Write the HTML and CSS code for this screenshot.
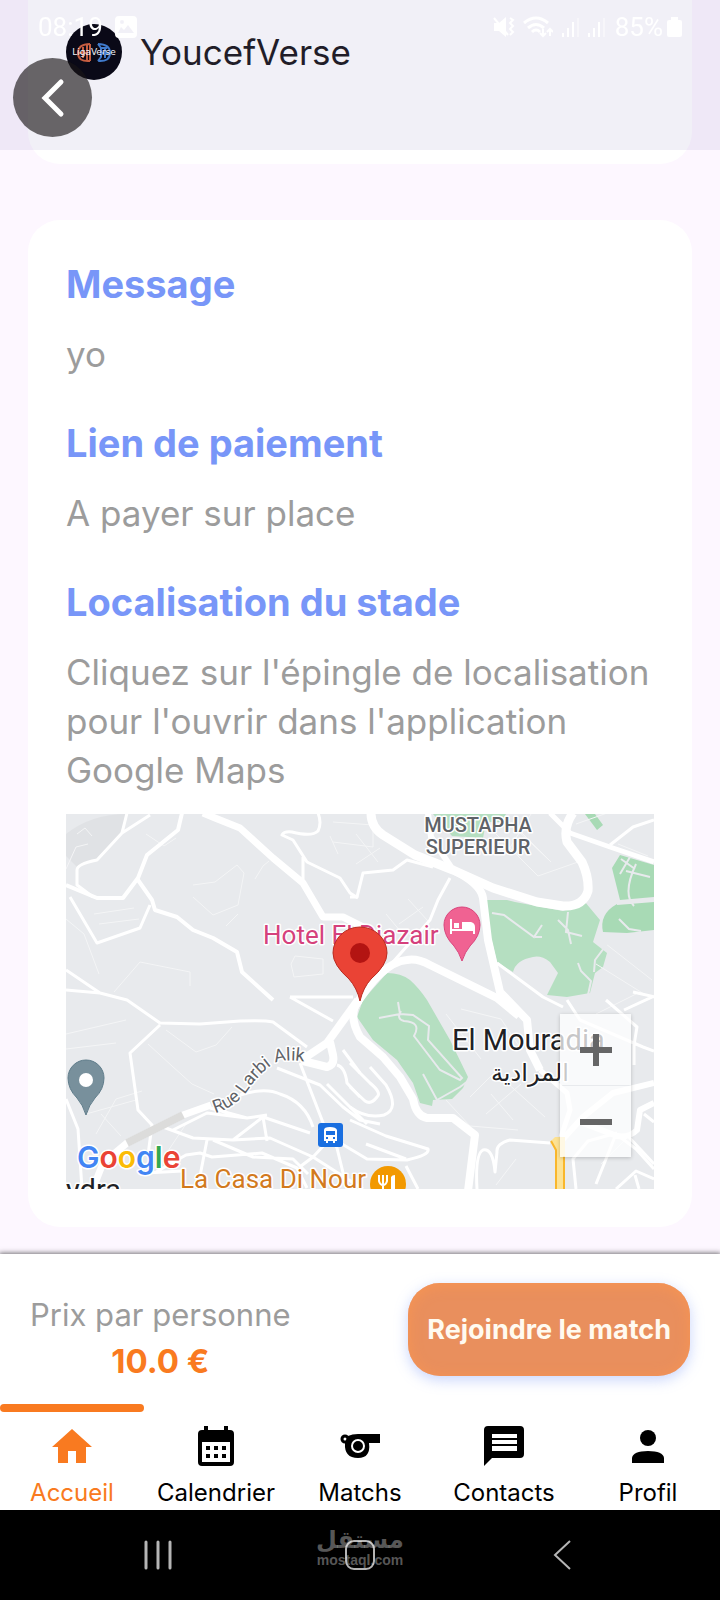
FILE: index.html
```html
<!DOCTYPE html>
<html lang="fr">

<head>
    <meta charset="UTF-8" />
    <meta name="viewport" content="width=device-width, initial-scale=1.0" />
    <title>Détails du match</title>
    <link rel="stylesheet" href="styles.css">
</head>

<body>

    <header class="entete">
        <div class="statut">
            <span>08:19</span>
            <svg class="statut-photo" width="22" height="22" viewBox="0 0 22 22">
                <path fill="#fff" fill-rule="evenodd" d="M4 0h14a4 4 0 0 1 4 4v14a4 4 0 0 1-4 4H4a4 4 0 0 1-4-4V4a4 4 0 0 1 4-4zM3 17h16l-6-8-4 5-3-3zM7 4a2 2 0 1 0 0 4 2 2 0 0 0 0-4z" />
            </svg>
            <div class="statut-droite">
                <svg width="22" height="22" viewBox="0 0 22 22">
                    <path fill="#fff" d="M1 7h5l7-6v20l-7-6H1z" />
                    <path fill="none" stroke="#fff" stroke-width="2" d="M1 2l14 17M17 2l3 2-3 3 3 3-3 3 3 3-3 3" />
                </svg>
                <svg width="30" height="22" viewBox="0 0 30 22">
                    <path fill="none" stroke="#fff" stroke-width="3" d="M1 7q12-10 24 0M5 12q8-7 16 0M9 16q4-4 8 0" />
                    <path fill="none" stroke="#fff" stroke-width="2" d="M20 13v7m-3-3l3 3 3-3M27 20v-7m-3 3l3-3 3 3" />
                </svg>
                <svg width="18" height="22" viewBox="0 0 18 22">
                    <path stroke="#fff" stroke-width="2" d="M2 21v-4M7 21v-9M12 21V6" />
                    <path stroke="#fff" stroke-width="2" opacity=".4" d="M17 21V2" />
                </svg>
                <svg width="18" height="22" viewBox="0 0 18 22">
                    <path stroke="#fff" stroke-width="2" d="M2 21v-4M7 21v-9M12 21V6" />
                    <path stroke="#fff" stroke-width="2" opacity=".4" d="M17 21V2" />
                </svg>
                <span class="statut-batterie">85%
                    <svg width="15" height="20" viewBox="0 0 15 20">
                        <path fill="#fff" d="M4 0h7v3h2q2 0 2 2v13q0 2-2 2H2q-2 0-2-2V5q0-2 2-2h2z" />
                    </svg>
                </span>
            </div>
        </div>
        <button class="btn-retour" aria-label="Retour">
            <svg width="24" height="40" viewBox="0 0 24 40">
                <path fill="none" stroke="#fff" stroke-width="5" stroke-linecap="round" d="M20 4L4 20l16 16" />
            </svg>
        </button>
    </header>

    <main class="contenu">
        <section class="carte carte-joueur">
            <svg class="avatar" width="56" height="56" viewBox="0 0 56 56">
                <circle cx="28" cy="28" r="28" fill="#05050c" />
                <g fill="none" stroke-width="2">
                    <path stroke="#d0603a" d="M24 20v17M21 20v17M24 20q-12 0-12 9t12 8M17 23v11M13 29h8" />
                    <path stroke="#3f7fd0" d="M32 20q12 0 12 9t-12 8M32 20l3 4v9l-3 4M39 23v11M35 29h8M35 24h6" />
                </g>
                <text x="28" y="31" text-anchor="middle" class="avatar-texte">LigaVerse</text>
            </svg>
            <span class="joueur">YoucefVerse</span>
        </section>

        <section class="carte carte-details">
            <h2>Message</h2>
            <p>yo</p>
            <h2>Lien de paiement</h2>
            <p>A payer sur place</p>
            <h2>Localisation du stade</h2>
            <p>Cliquez sur l'épingle de localisation pour l'ouvrir dans l'application Google Maps</p>

            <div class="plan">
                <svg class="plan-fond" viewBox="0 0 588 375">
                    <rect width="588" height="375" fill="#e8eaed" />
                    <path fill="#e0e2e5" d="M0 20Q25 0 61 0L52 25 31 46 11 53 0 42z" />

                    <!-- parcs -->
                    <g fill="#b5dfc1">
                        <path d="M367 0h73l-4 8h-16l-3 16-31-2z" />
                        <path d="M421 86l20 0 8 2 48 9 22-9 15 18-7 22 14 11-4 14-8 6-5 20-23 4-20-2 11-22-8-11q-9-7-17-5-17 3-20 15l-16-10-12-49z" />
                        <path fill="#a8dab5" d="M554 41l34 10v32l-34 3-8-32zM551 90l37-3v29l-27 3-24-1q-4-18 14-28zM519 0h10l8 11-6 5z" />
                        <path d="M297 186l24-27q14 0 23 7 9 8 17 20l23 40 18 37-5 11-11 11-19 1-1 6-12-3-7-20-16-23-24-20-16-23z" />
                    </g>

                    <!-- petites rues -->
                    <g fill="none" stroke="#f4f5f6" stroke-width="1">
                        <path d="M11 20l8-6 7 8M0 55l10-22 12-3M80 20l18 12 12-8M127 71l22-3 22-17 7 8-6 32-25 10-20-18M189 65l8-13 6-5M0 105l18 15 15 40M28 100l40-6M33 110l40-5M48 178l26-30 50 10v14M160 112l12-12M225 150l4-8 28 3v15l-29 3zM267 8l40 3v22l-40-5M272 40l-8-18" />
                        <path d="M0 220l60-14M0 235l50-6M82 230l24 22 20 18 22 10M100 216l30 22 20-7 16-18M20 300l50-14M30 320l20-35 26-8M35 300l20 22M100 340l20-30M290 20l22 28M290 50l24-16M333 110l24-17M320 100l20 24M342 85l20 22" />
                        <path d="M430 20l42 42 40-14M450 15l34 32M445 8l40 40M465 0l-25 40M380 200l35 45M395 195l40 10 20 30M404 283l25-25 50 45M420 300l35-30M380 286l24 26 48 4M425 280l22 26M530 150l48 30M540 130l46 36M510 10l34-12M552 30l30 12M530 200l40-20M450 345l-20 26M535 350l30-30" />
                    </g>

                    <!-- rues -->
                    <g fill="none" stroke="#fff" stroke-width="3" stroke-linejoin="round">
                        <path d="M61-1l-5 20-25 27q-20 4-20 10v15l16 12M84 1L56 19M237 43v25M292 84l-8-5-10-15-33-16-14-22-11-5q2-4 10-3 20 5 26-1 4-8 0-18" />
                        <path stroke-width="4" d="M116-1l-4 17-31 25-9 23-15 20H31L0 71M72 66l14 20 3 10 22 7 16 13 20 8 24 14 5 20 31 28" />
                        <path d="M84 91l-10 23-43 15L4 83M0 156l34 23L0 176M34 179l27 7 33 23 40 1 40-3q25-1 33 1l34 25M94 211l-30 28 8 57 14 15-4 30M0 285l12 30 4 60M224 183l63 0M224 183l43 24" />
                        <path d="M174 281q25-8 40-1 25 8 33 33M234 249l27 70 10 15 10 41M211 254l43 17 23 22 17 13 20 4M261 270l40 40M271 251q8 2 10 18l13 14M277 236l17 23M97 313l30 11 40 2 30-23 47 16M107 316l34-17 40 5 20-3M144 294l37 10M197 303l4 24M141 326l-7 36M90 358l30-17 14-2 12 4 50-4 35 15 10 20M147 326l40 17 40 2 15 15M167 326l37-2 43 19 50 32M247 343l14-15M80 359l36-2M235 375v-23l12-9" />
                        <path d="M284 249l20 20q12 10 7 14-6 8-12 4l-15-14M304 253l16 18q14 24-2 30-18 4-34-8M284 306l36 16 42 13q2 6-21 11l-40-1-25-15M484 329l-40-3q-14 4-13 12l-2 20q-2-24-12-22-8 4-6 39M340 352l12 23M300 330l40 15" />
                        <path d="M384 64l-12 22-8 20-37 42M367 53l-26-7-14 10-30 3-6 24-7 0M544 31l23-18 21-7M431 149l46 34 20 10M501 186l13 20 63 27 11 4M540 186l31 27-3 18 0 20M510 375l-3-30 15-18 29-8M530 370l20-50 20 15 18 20M560 320l28 30M578 300l10 8M550 375l20-18 18 8M567 178l22 5M558 196l30-14M573 375l-4-14" />
                    </g>

                    <!-- allées -->
                    <g fill="none" stroke="#e8eaed" stroke-width="2">
                        <path d="M426 99l12 2 30 22 8-12M469 123h7M492 106l10 10 3 14M502 98l-2 20 16 4M541 130l-12 16-1 12M512 149l3 8 10 10-3 14M555 45l14 10M560 57l24 6M564 43l-10 17M570 50q-14 30-2 42M551 90l37-3M553 105l10 10 12 2" />
                        <path d="M313 204l21-4 13 1 16 11-1 14 34 38-2 2-20-10-26-34q8-14-10-15-8-2-3-10M334 200l-2-12M357 260l14 26 23-13 8-6" />
                    </g>

                    <!-- axes principaux -->
                    <g fill="none" stroke="#fff" stroke-width="8" stroke-linejoin="round">
                        <path stroke-width="7" d="M137-1l12 5 25 10 33 30 30 25 20 34h20l20 10 10 40" />
                        <path stroke-width="9" d="M305-1q0 14 12 22l32 20 38 15 40 18 44 14 26 4q20 1 25-15 1-14-6-29l-15-20q-4-15 6-29" />
                        <path stroke-width="6" d="M362-1l3 24 20 30" />
                        <path d="M387 56q28 14 30 28l5 42 12 52 27 28 3 30 10 20" />
                        <path stroke-width="5" d="M474 256l27 23 3 17-9 27M484-1l20 20 40 14 44 15" />
                        <path d="M288 194q28-46 53-48 10-2 23 5l67 33 22 18" />
                        <path d="M293 186q-12 14 1 37l23 20 17 20 13 22q3 17 14 19l26 0 22 17-7 56" />
                        <path d="M292 186l-31 43-27 18M237 247l24 6q8-2 6-12l-3-13" />
                        <path stroke-width="7" d="M26 377l11-28 24-20 56-28 28-10" />
                        <path stroke-width="6" d="M588 269l-41 10-30 24-20 22M588 289l-14 7-3 20q-8 8-20 6l-34-13" />
                    </g>
                    <path fill="none" stroke="#dcdcdb" stroke-width="8" d="M61 329l56-28" />
                    <path fill="#fde293" d="M485 327l4-4h10v53h-10v-40z" />
                    <path fill="none" stroke="#f9b72c" stroke-width="2" d="M485 327l5 9v40M498 342v34" />

                    <!-- lieux -->
                    <g class="lieu">
                        <text class="quartier" x="412" y="18" text-anchor="middle">MUSTAPHA</text>
                        <text class="quartier" x="412" y="40" text-anchor="middle">SUPERIEUR</text>
                        <text class="hotel" x="197" y="130">Hotel El Djazair</text>
                        <text class="ville" x="386" y="236">El Mouradia</text>
                        <text class="ville-ar" x="464" y="267" text-anchor="middle" direction="rtl">المرادية</text>
                        <text class="ville" x="0" y="386">ydra</text>
                        <text class="resto" x="114" y="374">La Casa Di Nour</text>
                        <path id="rue-larbi" fill="none" stroke="none" d="M149 299Q170 293 182 276T207 250Q222 242 260 252" />
                        <text class="rue"><textPath href="#rue-larbi">Rue Larbi Alik</textPath></text>
                        <text class="google" x="11" y="354"><tspan fill="#4285f4">G</tspan><tspan fill="#ea4335">o</tspan><tspan fill="#fbbc05">o</tspan><tspan fill="#4285f4">g</tspan><tspan fill="#34a853">l</tspan><tspan fill="#ea4335">e</tspan></text>
                    </g>

                    <!-- repères -->
                    <path fill="#f06292" stroke="#d9447c" stroke-width="1" d="M396 147q-3-9-8-15-10-10-10-21a18 18 0 0 1 36 0q0 11-10 21-5 6-8 15z" />
                    <path fill="#fff" d="M384 105h2v10h10v-7h9q4 1 4 5v7h-2v-3h-21v3h-2zM388 109h5v5h-5z" />
                    <path fill="#78909c" stroke="#607d8b" stroke-width="1" d="M20 301q-3-10-9-17-9-9-9-20a18 18 0 0 1 36 0q0 11-9 20-6 7-9 17z" />
                    <circle cx="20" cy="266" r="7" fill="#fff" />
                    <rect x="252" y="309" width="25" height="24" rx="3" fill="#1a6fe0" />
                    <path fill="#fff" fill-rule="evenodd" d="M258 316q0-3 6-3t7 3v11h-2v2h-2v-2h-5v2h-2v-2h-2zM260 317v4h9v-4zM260 323v2h2v-2zM267 323v2h2v-2z" />
                    <circle cx="322" cy="370" r="18" fill="#f29900" />
                    <path fill="none" stroke="#fff" stroke-width="2" d="M313 361v6q1 4 4 4t4-4v-6M317 361v14" />
                    <path fill="#fff" d="M325 375v-12q1-2 4-2v14z" />
                    <path fill="#ea4335" stroke="#b92b20" stroke-width="1" d="M294 187q-3-13-11-22-16-14-16-26a27 26 0 0 1 54 0q0 12-16 26-8 9-11 22z" />
                    <circle cx="294" cy="139" r="10" fill="#b31412" />
                </svg>

                <div class="zoom">
                    <button aria-label="Zoom avant">
                        <svg width="32" height="32" viewBox="0 0 32 32">
                            <path stroke="#666" stroke-width="6" d="M0 16h32M16 0v32" />
                        </svg>
                    </button>
                    <button aria-label="Zoom arrière">
                        <svg width="32" height="32" viewBox="0 0 32 32">
                            <path stroke="#666" stroke-width="6" d="M0 16h32" />
                        </svg>
                    </button>
                </div>
            </div>
        </section>
    </main>

    <footer class="pied">
        <div class="barre-prix">
            <div class="prix">
                <span>Prix par personne</span>
                <strong>10.0 €</strong>
            </div>
            <button class="btn-rejoindre">Rejoindre le match</button>
        </div>

        <nav class="onglets">
            <a href="#" class="actif">
                <svg width="42" height="42" viewBox="0 0 42 42">
                    <path fill="currentColor" d="M21 4L1 22h6v16h10V26h8v12h10V22h6z" />
                </svg>
                Accueil
            </a>
            <a href="#">
                <svg width="42" height="42" viewBox="0 0 42 42">
                    <path fill="currentColor" fill-rule="evenodd" d="M9 1h4v4h16V1h4v4h2q4 0 4 4v28q0 4-4 4H7q-4 0-4-4V9q0-4 4-4h2zM7 17v20h28V17zM11 21h4v4h-4zM19 21h4v4h-4zM27 21h4v4h-4zM11 29h4v4h-4zM19 29h4v4h-4zM27 29h4v4h-4z" />
                </svg>
                Calendrier
            </a>
            <a href="#">
                <svg width="42" height="42" viewBox="0 0 42 42">
                    <circle cx="6" cy="14" r="3" fill="none" stroke="currentColor" stroke-width="3" />
                    <path fill="currentColor" d="M9 11q4-2 10-2h22v9H30q2 15-11 15Q5 33 6 18z" />
                    <circle cx="19" cy="21" r="6" fill="none" stroke="#fff" stroke-width="2" />
                </svg>
                Matchs
            </a>
            <a href="#">
                <svg width="42" height="42" viewBox="0 0 42 42">
                    <path fill="currentColor" fill-rule="evenodd" d="M5 1h32q4 0 4 4v24q0 4-4 4H9l-8 8V5q0-4 4-4zM9 9v4h25V9zM9 15v4h25v-4zM9 21v5h25v-5z" />
                </svg>
                Contacts
            </a>
            <a href="#">
                <svg width="42" height="42" viewBox="0 0 42 42">
                    <circle cx="21" cy="13" r="8" fill="currentColor" />
                    <path fill="currentColor" d="M5 38v-5q1-7 16-7t16 7v5z" />
                </svg>
                Profil
            </a>
        </nav>

        <div class="systeme">
            <button aria-label="Applications récentes">
                <svg width="30" height="30" viewBox="0 0 30 30">
                    <path stroke="#b5b5b5" stroke-width="3" stroke-linecap="round" d="M3 2v26M15 2v26M27 2v26" />
                </svg>
            </button>
            <button aria-label="Écran d'accueil">
                <svg width="30" height="30" viewBox="0 0 30 30">
                    <rect x="1" y="1" width="28" height="28" rx="8" fill="none" stroke="#b5b5b5" stroke-width="2" />
                </svg>
            </button>
            <button aria-label="Précédent">
                <svg width="18" height="30" viewBox="0 0 18 30">
                    <path fill="none" stroke="#b5b5b5" stroke-width="2" d="M17 1L2 15l15 14" />
                </svg>
            </button>
            <div class="filigrane">
                <span class="filigrane-ar">مستقل</span>
                <span>mostaql.com</span>
            </div>
        </div>
    </footer>

</body>

</html>
```

FILE: styles.css
```css
* {
    box-sizing: border-box;
}

body {
    margin: 0;
    min-height: 100vh;
    display: flex;
    flex-direction: column;
    background: #fdf7ff;
    font-family: Inter, "Liberation Sans", sans-serif;
    color: #1d1b20;
}

button {
    padding: 0;
    border: none;
    background: none;
    font-family: inherit;
    cursor: pointer;
}

svg {
    display: block;
    flex-shrink: 0;
}

/* En-tête */
.entete {
    position: fixed;
    top: 0;
    left: 0;
    right: 0;
    z-index: 2;
    height: 150px;
    background: rgba(80, 70, 150, 0.08);
}

.statut {
    display: flex;
    align-items: center;
    gap: 12px;
    height: 54px;
    padding: 0 38px;
    margin-bottom: 4px;
    color: #fff;
    font-family: Roboto, sans-serif;
    font-size: 26px;
}

.statut-droite {
    display: flex;
    align-items: center;
    gap: 8px;
    margin-left: auto;
}

.statut-batterie {
    display: flex;
    align-items: center;
    gap: 4px;
    margin-left: 2px;
}

.btn-retour {
    display: flex;
    align-items: center;
    justify-content: center;
    width: 79px;
    height: 79px;
    margin-left: 13px;
    border-radius: 50%;
    background: rgba(25, 22, 22, 0.64);
}

/* Contenu */
.contenu {
    display: flex;
    flex-direction: column;
    flex: 1;
    gap: 56px;
    padding: 0 28px 24px;
}

.carte {
    background: #fff;
    border-radius: 32px;
    padding: 42px 38px 38px;
}

.carte-joueur {
    display: flex;
    align-items: center;
    gap: 18px;
    padding: 24px 38px 84px;
    border-radius: 0 0 32px 32px;
}

.avatar-texte {
    font-family: "DejaVu Sans", sans-serif;
    font-size: 9px;
    fill: #fff;
}

.joueur {
    font-size: 35px;
    line-height: 56px;
}

.carte h2 {
    margin: 0 0 24px;
    font-size: 38px;
    line-height: 44px;
    font-weight: 700;
    color: #7896f8;
}

.carte p {
    margin: 0 0 42px;
    font-size: 35px;
    line-height: 49px;
    color: #9c9c9c;
}

.carte p:last-of-type {
    margin-bottom: 19px;
}

/* Plan */
.plan {
    position: relative;
}

.plan-fond {
    width: 100%;
    height: auto;
}

.lieu {
    font-family: Roboto, sans-serif;
    stroke: #fff;
    stroke-width: 3px;
    stroke-linejoin: round;
    paint-order: stroke;
}

.quartier {
    font-size: 20px;
    font-weight: 500;
    fill: #5f6368;
}

.hotel {
    font-size: 26px;
    fill: #d5417c;
}

.ville {
    font-size: 29px;
    fill: #202124;
}

.ville-ar {
    font-family: "DejaVu Sans", sans-serif;
    font-size: 24px;
    fill: #202124;
}

.resto {
    font-size: 26px;
    fill: #d27a1e;
}

.rue {
    font-size: 18px;
    fill: #5f6368;
}

.google {
    font-family: Inter, sans-serif;
    font-size: 30px;
    font-weight: 600;
}

.zoom {
    position: absolute;
    right: 23px;
    bottom: 32px;
    display: flex;
    flex-direction: column;
    gap: 1px;
    box-shadow: 0 1px 4px rgba(0, 0, 0, 0.2);
}

.zoom button {
    display: flex;
    align-items: center;
    justify-content: center;
    width: 71px;
    height: 71px;
    background: rgba(255, 255, 255, 0.75);
}

/* Prix */
.pied {
    position: sticky;
    bottom: 0;
    z-index: 1;
    background: #fff;
    box-shadow: 0 0 5px 1px rgba(0, 0, 0, 0.55);
}

.barre-prix {
    display: flex;
    align-items: flex-start;
    justify-content: space-between;
    padding: 29px 30px 13px;
}

.prix {
    display: flex;
    flex-direction: column;
    align-items: center;
    gap: 6px;
    padding-top: 12px;
    padding-bottom: 6px;
    font-size: 31px;
    line-height: 40px;
    color: #9c9c9c;
}

.prix strong {
    font-size: 33px;
    color: #f97a20;
}

.btn-rejoindre {
    height: 93px;
    padding: 0 19px;
    border-radius: 32px;
    background: #e98f5d;
    box-shadow: 0 4px 14px rgba(120, 150, 248, 0.4), inset 0 2px 14px #f89552;
    color: #fffaf0;
    font-size: 27px;
    font-weight: 700;
}

/* Onglets */
.onglets {
    display: grid;
    grid-template-columns: repeat(5, 1fr);
}

.onglets a {
    display: flex;
    flex-direction: column;
    align-items: center;
    gap: 11px;
    padding: 17px 0 2px;
    border-top: 8px solid transparent;
    font-size: 24px;
    line-height: 30px;
    color: #000;
    text-decoration: none;
}

.onglets .actif {
    color: #f97a20;
    position: relative;
}

.onglets .actif::before {
    content: "";
    position: absolute;
    top: -4px;
    left: 0;
    right: 0;
    height: 8px;
    border-radius: 4px;
    background: #f97a20;
}

/* Barre système */
.systeme {
    position: relative;
    display: grid;
    grid-template-columns: repeat(3, 1fr);
    height: 90px;
    padding: 0 8%;
    background: #000;
}

.systeme button {
    display: flex;
    align-items: center;
    justify-content: center;
}

.filigrane {
    position: absolute;
    inset: 0;
    display: flex;
    flex-direction: column;
    align-items: center;
    padding-top: 18px;
    color: rgba(255, 255, 255, 0.35);
    font-family: "Liberation Sans", sans-serif;
    font-size: 14px;
    line-height: 16px;
    font-weight: 700;
    pointer-events: none;
}

.filigrane-ar {
    font-family: "DejaVu Sans", sans-serif;
    font-size: 24px;
    line-height: 24px;
}
```
